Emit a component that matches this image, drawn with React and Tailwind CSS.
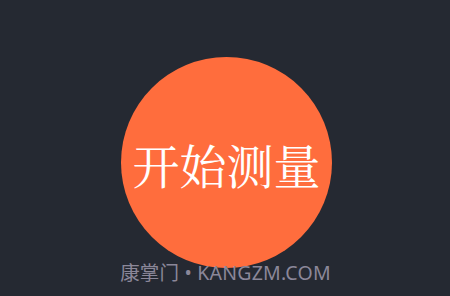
export default function App() {
  return (
    <div className="relative flex h-[296px] w-[450px] flex-col items-center overflow-hidden bg-[#252932]">
      <button className="mt-[57px] ml-[3px] flex size-[211px] items-center justify-center rounded-full bg-[#ff6d3d] pt-[2px] text-[47px] leading-none text-white [font-family:'Noto_Serif_CJK_SC','Source_Han_Serif_SC',serif]">
        开始测量
      </button>
      <div className="absolute top-[260px] left-0 w-full pl-[1px] text-center text-[19.5px] leading-[26px] tracking-[0.2px] text-[#8b8799] [font-family:'Noto_Sans','Noto_Sans_CJK_SC',sans-serif]">
        康掌门 • KANGZM.COM
      </div>
    </div>
  );
}
